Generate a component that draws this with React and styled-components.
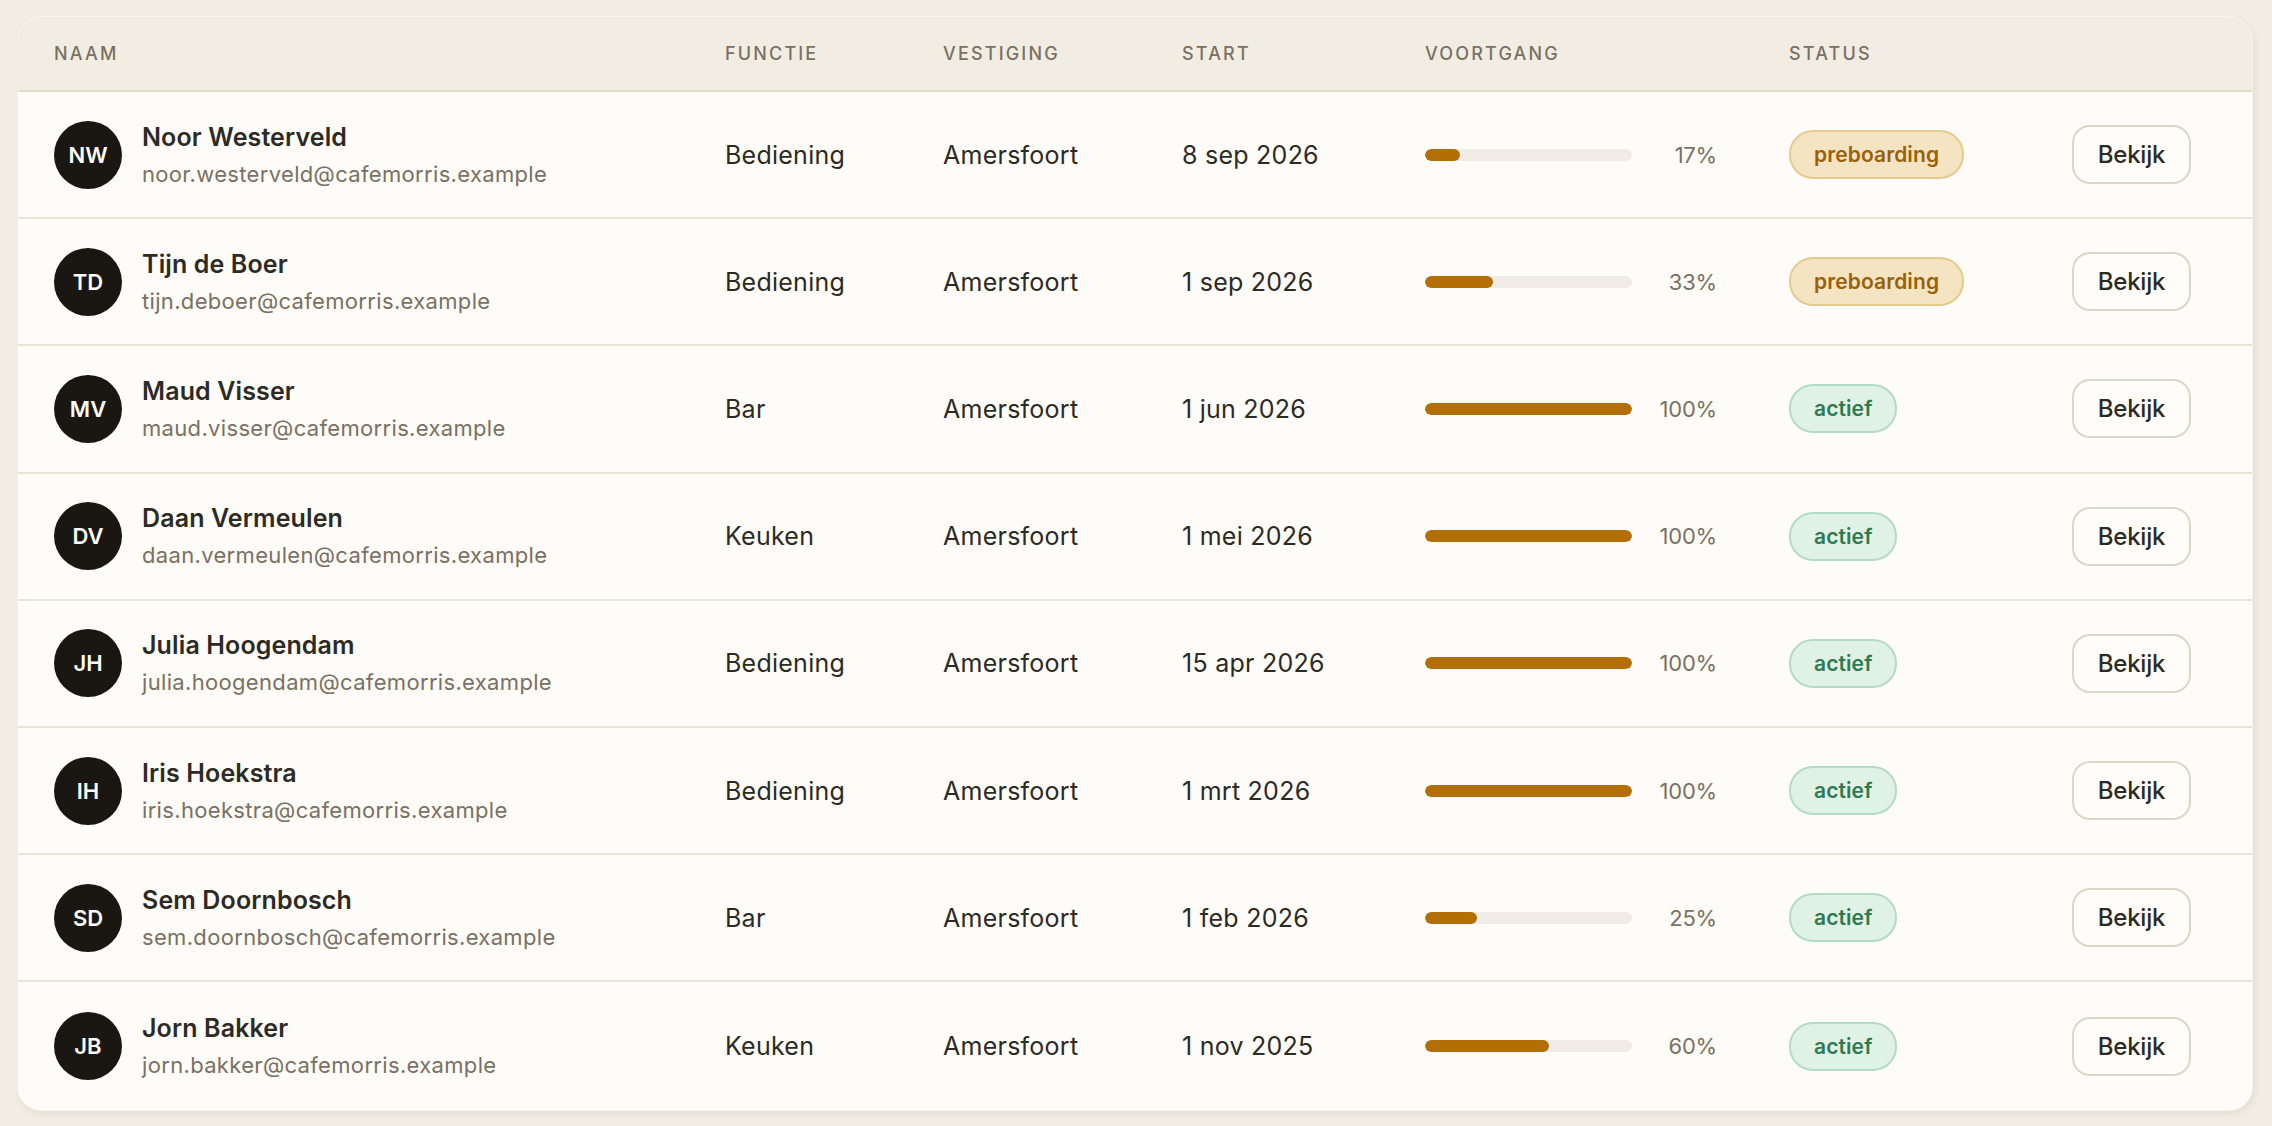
import React from 'react';
import styled, { createGlobalStyle } from 'styled-components';

const GlobalStyle = createGlobalStyle`
    html, body {
        margin: 0;
        padding: 0;
        background: #f1ede4;
    }
    body {
        font-family: Inter, "Noto Sans", "Liberation Sans", sans-serif;
        color: #2d2a24;
    }
`;

const employees = [
    { initials: 'NW', name: 'Noor Westerveld', email: 'noor.westerveld@cafemorris.example', role: 'Bediening', place: 'Amersfoort', start: '8 sep 2026', progress: 17, status: 'preboarding' },
    { initials: 'TD', name: 'Tijn de Boer', email: 'tijn.deboer@cafemorris.example', role: 'Bediening', place: 'Amersfoort', start: '1 sep 2026', progress: 33, status: 'preboarding' },
    { initials: 'MV', name: 'Maud Visser', email: 'maud.visser@cafemorris.example', role: 'Bar', place: 'Amersfoort', start: '1 jun 2026', progress: 100, status: 'actief' },
    { initials: 'DV', name: 'Daan Vermeulen', email: 'daan.vermeulen@cafemorris.example', role: 'Keuken', place: 'Amersfoort', start: '1 mei 2026', progress: 100, status: 'actief' },
    { initials: 'JH', name: 'Julia Hoogendam', email: 'julia.hoogendam@cafemorris.example', role: 'Bediening', place: 'Amersfoort', start: '15 apr 2026', progress: 100, status: 'actief' },
    { initials: 'IH', name: 'Iris Hoekstra', email: 'iris.hoekstra@cafemorris.example', role: 'Bediening', place: 'Amersfoort', start: '1 mrt 2026', progress: 100, status: 'actief' },
    { initials: 'SD', name: 'Sem Doornbosch', email: 'sem.doornbosch@cafemorris.example', role: 'Bar', place: 'Amersfoort', start: '1 feb 2026', progress: 25, status: 'actief' },
    { initials: 'JB', name: 'Jorn Bakker', email: 'jorn.bakker@cafemorris.example', role: 'Keuken', place: 'Amersfoort', start: '1 nov 2025', progress: 60, status: 'actief' },
];

const columns = '671px 218px 239px 243px 364px 283px 1fr';

function App() {
    return (
        <>
            <GlobalStyle />
            <Page>
                <Card>
                    <HeaderRow>
                        <HeadCell>Naam</HeadCell>
                        <HeadCell>Functie</HeadCell>
                        <HeadCell>Vestiging</HeadCell>
                        <HeadCell>Start</HeadCell>
                        <HeadCell>Voortgang</HeadCell>
                        <HeadCell>Status</HeadCell>
                        <HeadCell />
                    </HeaderRow>
                    {employees.map((emp, i) => (
                        <Row key={emp.email} $last={i === employees.length - 1}>
                            <Person>
                                <Avatar>{emp.initials}</Avatar>
                                <div>
                                    <Name>{emp.name}</Name>
                                    <Email>{emp.email}</Email>
                                </div>
                            </Person>
                            <Cell>{emp.role}</Cell>
                            <Cell>{emp.place}</Cell>
                            <Cell>{emp.start}</Cell>
                            <Progress>
                                <Track>
                                    <Fill style={{ width: `${emp.progress}%` }} />
                                </Track>
                                <Percent>{emp.progress}%</Percent>
                            </Progress>
                            <div>
                                <Badge $variant={emp.status}>{emp.status}</Badge>
                            </div>
                            <div>
                                <ViewButton>Bekijk</ViewButton>
                            </div>
                        </Row>
                    ))}
                </Card>
            </Page>
        </>
    );
}

const Page = styled.div`
    padding: 16px 19px 16px 17px;
`;

const Card = styled.div`
    background: #fdfcf8;
    border: 1px solid #f7f4ee;
    border-radius: 24px;
    overflow: hidden;
    box-shadow: 2px 3px 6px rgba(80, 60, 30, 0.08);
`;

const HeaderRow = styled.div`
    display: grid;
    grid-template-columns: ${columns};
    align-items: center;
    height: 73px;
    padding: 0 36px;
    background: #f2ede3;
    border-bottom: 2px solid #e2dccf;
`;

const HeadCell = styled.div`
    font-size: 18px;
    font-weight: 500;
    letter-spacing: 0.12em;
    text-transform: uppercase;
    color: #7a7063;
`;

const Row = styled.div`
    display: grid;
    grid-template-columns: ${columns};
    align-items: center;
    height: ${(p) => (p.$last ? '128px' : '125.2px')};
    padding: 0 36px;
    border-bottom: ${(p) => (p.$last ? 'none' : '2px solid #e9e4d8')};
`;

const Person = styled.div`
    display: flex;
    align-items: center;
    gap: 20px;
`;

const Avatar = styled.div`
    width: 68px;
    height: 68px;
    border-radius: 50%;
    background: #1a1712;
    color: #fdfcf8;
    display: flex;
    align-items: center;
    justify-content: center;
    font-size: 22px;
    font-weight: 600;
`;

const Name = styled.div`
    font-size: 25px;
    font-weight: 600;
    letter-spacing: 0.005em;
    color: #2d2a24;
    line-height: 30px;
`;

const Email = styled.div`
    margin-top: 8px;
    font-size: 22px;
    letter-spacing: 0.015em;
    color: #7a7063;
    line-height: 28px;
`;

const Cell = styled.div`
    font-size: 25px;
    letter-spacing: 0.01em;
    color: #2d2a24;
`;

const Progress = styled.div`
    display: flex;
    align-items: center;
`;

const Track = styled.div`
    width: 207px;
    height: 12px;
    border-radius: 6px;
    background: #f1ede6;
    overflow: hidden;
`;

const Fill = styled.div`
    height: 100%;
    border-radius: 6px;
    background: #b36f06;
`;

const Percent = styled.div`
    width: 85px;
    text-align: right;
    font-size: 22px;
    letter-spacing: -0.01em;
    color: #7a7063;
`;

const badgeColors = {
    preboarding: { bg: '#f5e4c2', border: '#e6cb8e', color: '#9a6108' },
    actief: { bg: '#e0f1e6', border: '#b4dbc5', color: '#2f7a50' },
};

const Badge = styled.span`
    display: inline-flex;
    align-items: center;
    height: 45px;
    padding: 0 23px;
    border-radius: 24px;
    font-size: 21px;
    font-weight: 600;
    letter-spacing: 0.005em;
    background: ${(p) => badgeColors[p.$variant].bg};
    border: 2px solid ${(p) => badgeColors[p.$variant].border};
    color: ${(p) => badgeColors[p.$variant].color};
`;

const ViewButton = styled.button`
    width: 119px;
    height: 59px;
    border-radius: 18px;
    border: 2px solid #ddd6c8;
    background: #fffdf9;
    font-family: inherit;
    font-size: 24px;
    font-weight: 500;
    letter-spacing: -0.01em;
    color: #2d2a24;
    cursor: pointer;
`;

export default App;
